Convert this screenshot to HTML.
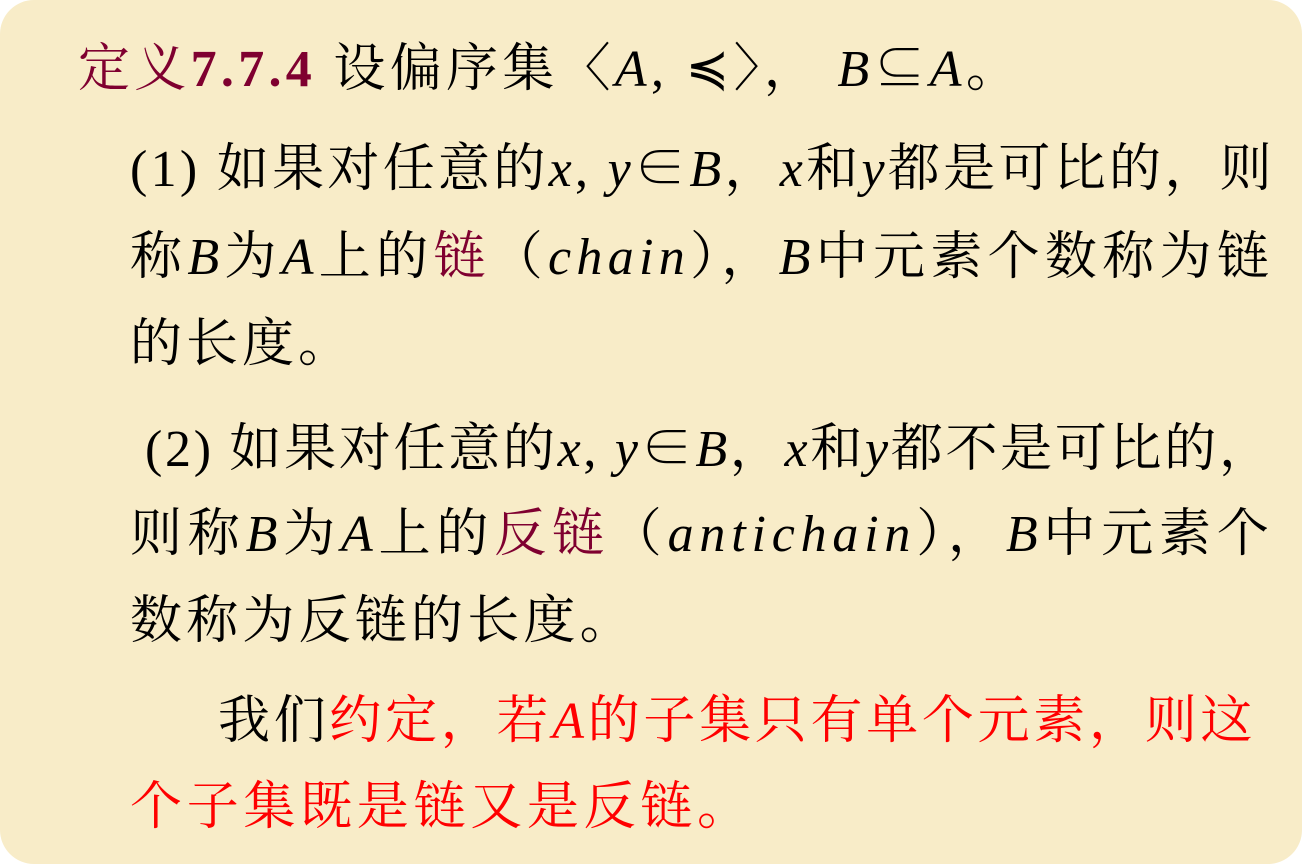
<!DOCTYPE html>
<html><head><meta charset="utf-8"><style>
html,body{margin:0;padding:0;background:#fff;}
.bg{position:absolute;left:0;top:0;width:1302px;height:864px;border-radius:34px;background:#f8ecc8;overflow:hidden;}
.l{position:absolute;white-space:nowrap;font-family:"Liberation Serif","Noto Serif CJK SC",serif;font-size:52px;line-height:52px;color:#000;letter-spacing:2px;}
i{font-style:italic}
.dr{color:#7f0030}
.r{color:#f00}
b{font-weight:bold}
</style></head><body><div class="bg">
<div class="l" style="left:78px;top:44px;letter-spacing:4.3px"><span class="dr">定义<b>7.7.4</b></span> 设偏序集〈<i>A</i>, ≼〉， <i>B</i>⊆<i>A</i>。</div>
<div class="l" style="left:130px;top:144px;letter-spacing:3.3px">(1) 如果对任意的<i>x</i>, <i>y</i>∈<i>B</i>，<i>x</i>和<i>y</i>都是可比的，则</div>
<div class="l" style="left:130px;top:232px;letter-spacing:5.3px">称<i>B</i>为<i>A</i>上的<span class="dr">链</span>（<i>chain</i>），<i>B</i>中元素个数称为链</div>
<div class="l" style="left:130px;top:319px;letter-spacing:4px">的长度。</div>
<div class="l" style="left:145px;top:424px;letter-spacing:2.7px">(2) 如果对任意的<i>x</i>, <i>y</i>∈<i>B</i>，<i>x</i>和<i>y</i>都不是可比的，</div>
<div class="l" style="left:130px;top:509px;letter-spacing:5.8px">则称<i>B</i>为<i>A</i>上的<span class="dr">反链</span>（<i>antichain</i>），<i>B</i>中元素个</div>
<div class="l" style="left:130px;top:596px;letter-spacing:4.2px">数称为反链的长度。</div>
<div class="l" style="left:218px;top:696px;letter-spacing:3.7px">我们<span class="r">约定，若<i>A</i>的子集只有单个元素，则这</span></div>
<div class="l r" style="left:130px;top:782px;letter-spacing:4.7px">个子集既是链又是反链。</div>
</div></body></html>
